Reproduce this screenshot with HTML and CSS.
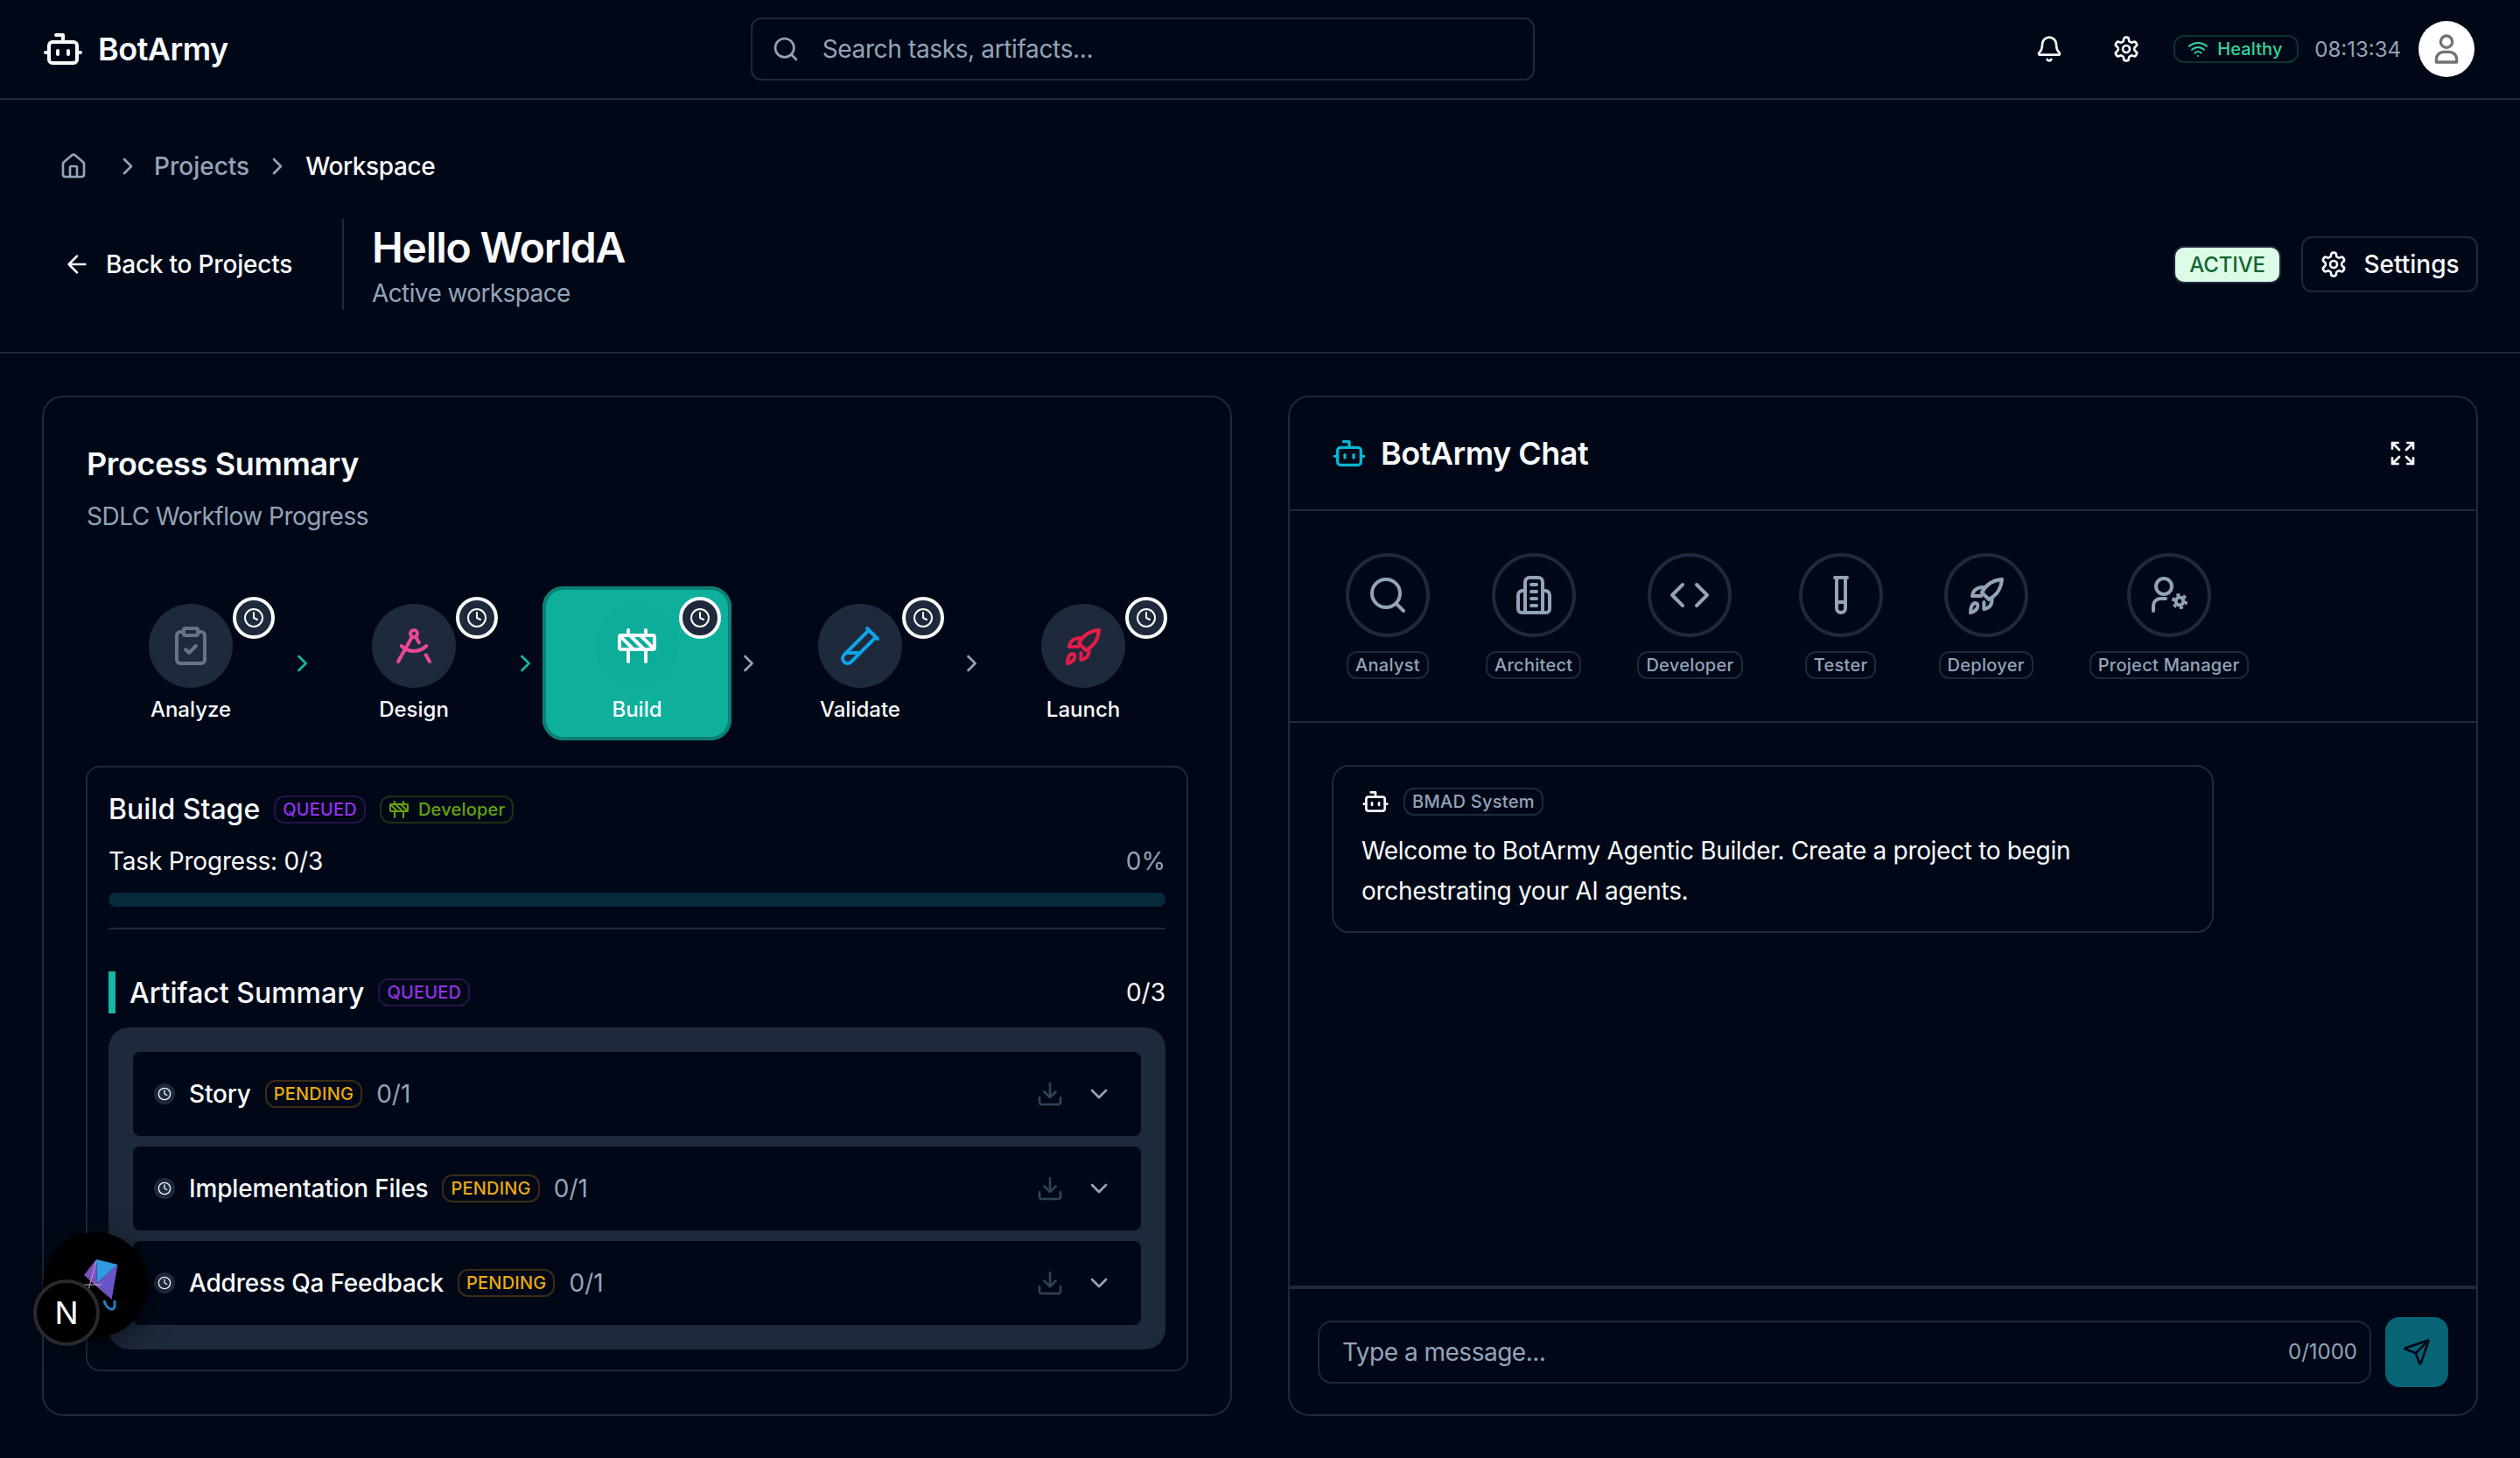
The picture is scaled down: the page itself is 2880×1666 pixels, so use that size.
FILE: index.html
```html
<!DOCTYPE html>
<html lang="en">
<head>
  <meta charset="UTF-8">
  <title>BotArmy - Workspace</title>
  <link rel="stylesheet" href="styles.css">
</head>
<body>
  <svg class="defs" aria-hidden="true">
    <symbol id="i-bot" viewBox="0 0 24 24"><path d="M12 8V4H8"/><rect x="4" y="8" width="16" height="12" rx="2"/><path d="M2 14h2M20 14h2M15 13v2M9 13v2"/></symbol>
    <symbol id="i-search" viewBox="0 0 24 24"><circle cx="11" cy="11" r="8"/><path d="m21 21-4.3-4.3"/></symbol>
    <symbol id="i-bell" viewBox="0 0 24 24"><path d="M10.268 21a2 2 0 0 0 3.464 0"/><path d="M3.262 15.326A1 1 0 0 0 4 17h16a1 1 0 0 0 .74-1.673C19.41 13.956 18 12.499 18 8A6 6 0 0 0 6 8c0 4.499-1.411 5.956-2.738 7.326"/></symbol>
    <symbol id="i-gear" viewBox="0 0 24 24"><path d="M12.22 2h-.44a2 2 0 0 0-2 2v.18a2 2 0 0 1-1 1.73l-.43.25a2 2 0 0 1-2 0l-.15-.08a2 2 0 0 0-2.73.73l-.22.38a2 2 0 0 0 .73 2.73l.15.1a2 2 0 0 1 1 1.72v.51a2 2 0 0 1-1 1.74l-.15.09a2 2 0 0 0-.73 2.73l.22.38a2 2 0 0 0 2.73.73l.15-.08a2 2 0 0 1 2 0l.43.25a2 2 0 0 1 1 1.73V20a2 2 0 0 0 2 2h.44a2 2 0 0 0 2-2v-.18a2 2 0 0 1 1-1.73l.43-.25a2 2 0 0 1 2 0l.15.08a2 2 0 0 0 2.73-.73l.22-.39a2 2 0 0 0-.73-2.73l-.15-.08a2 2 0 0 1-1-1.74v-.5a2 2 0 0 1 1-1.74l.15-.09a2 2 0 0 0 .73-2.73l-.22-.38a2 2 0 0 0-2.73-.73l-.15.08a2 2 0 0 1-2 0l-.43-.25a2 2 0 0 1-1-1.73V4a2 2 0 0 0-2-2z"/><circle cx="12" cy="12" r="3"/></symbol>
    <symbol id="i-wifi" viewBox="0 0 24 24"><path d="M12 20h.01M2 8.82a15 15 0 0 1 20 0M5 12.859a10 10 0 0 1 14 0M8.5 16.429a5 5 0 0 1 7 0"/></symbol>
    <symbol id="i-user" viewBox="0 0 24 24"><circle cx="12" cy="7" r="4"/><path d="M5 21v-2a5 5 0 0 1 5-5h4a5 5 0 0 1 5 5v2z"/></symbol>
    <symbol id="i-home" viewBox="0 0 24 24"><path d="M15 21v-8a1 1 0 0 0-1-1h-4a1 1 0 0 0-1 1v8"/><path d="M3 10a2 2 0 0 1 .709-1.528l7-5.999a2 2 0 0 1 2.582 0l7 5.999A2 2 0 0 1 21 10v9a2 2 0 0 1-2 2H5a2 2 0 0 1-2-2z"/></symbol>
    <symbol id="i-right" viewBox="0 0 24 24"><path d="m9 18 6-6-6-6"/></symbol>
    <symbol id="i-down" viewBox="0 0 24 24"><path d="m6 9 6 6 6-6"/></symbol>
    <symbol id="i-back" viewBox="0 0 24 24"><path d="m12 19-7-7 7-7M19 12H5"/></symbol>
    <symbol id="i-clock" viewBox="0 0 24 24"><circle cx="12" cy="12" r="10"/><path d="M12 6v6l4 2"/></symbol>
    <symbol id="i-clipboard" viewBox="0 0 24 24"><rect x="8" y="2" width="8" height="4" rx="1"/><path d="M16 4h2a2 2 0 0 1 2 2v14a2 2 0 0 1-2 2H6a2 2 0 0 1-2-2V6a2 2 0 0 1 2-2h2"/><path d="m9 14 2 2 4-4"/></symbol>
    <symbol id="i-compass" viewBox="0 0 24 24"><path d="m12.99 6.74 1.93 3.44M19.136 12a10 10 0 0 1-14.271 0M21 21l-2.16-3.84M3 21l8.02-14.26"/><circle cx="12" cy="5" r="2"/></symbol>
    <symbol id="i-barrier" viewBox="0 0 24 24"><rect x="2" y="6" width="20" height="8" rx="1"/><path d="M17 14v7M7 14v7M17 3v3M7 3v3M10 14 2.3 6.3M14 6l7.7 7.7M8 6l8 8"/></symbol>
    <symbol id="i-tube-d" viewBox="0 0 24 24"><path d="M21 7 6.82 21.18a2.83 2.83 0 0 1-3.99-.01a2.83 2.83 0 0 1 0-4L17 3"/><path d="m16 2 6 6M12 16H4"/></symbol>
    <symbol id="i-rocket" viewBox="0 0 24 24"><path d="M21 3c-5.500.500-9.500 3.500-11.500 7.500l4 4c4-2 7-6 7.500-11.500z"/><path d="M10.500 7.500c-3.500 0-6 1.500-6.500 5h5.200"/><path d="M15.200 13.500c.300 3.500-1 6-4.500 6.500v-4"/><path d="M3 22c0-3 1-5 2.500-5.500c1.500 0 2 1.500 1.500 2.500c-.500 1.500-2 2.500-4 3z"/></symbol>
    <symbol id="i-code" viewBox="0 0 24 24"><path d="m16 18 6-6-6-6M8 6l-6 6 6 6"/></symbol>
    <symbol id="i-building" viewBox="0 0 24 24"><path d="M7 22V4.500A2.500 2.500 0 0 1 9.500 2h5A2.500 2.500 0 0 1 17 4.500V22"/><path d="M7 9.500H5.500A2.500 2.500 0 0 0 3 12v8a2 2 0 0 0 2 2h14a2 2 0 0 0 2-2v-8a2.500 2.500 0 0 0-2.500-2.500H17"/><path d="M10.500 6h3M10.500 10h3M10.500 14h3M10.500 18h3"/></symbol>
    <symbol id="i-tube" viewBox="0 0 24 24"><path d="M14.500 2v17.500c0 1.400-1.100 2.500-2.500 2.500c-1.400 0-2.500-1.100-2.500-2.500V2"/><path d="M8.500 2h7M14.500 16h-5"/></symbol>
    <symbol id="i-usercog" viewBox="0 0 24 24"><circle cx="9" cy="7" r="4.500"/><path d="M3 21v-3a4 4 0 0 1 4-4h3"/><circle cx="18" cy="15.500" r="2.200"/><circle class="teeth" cx="18" cy="15.500" r="3.800"/></symbol>
    <symbol id="i-expand" viewBox="0 0 24 24"><path d="m15 15 6 6M15 9l6-6M21 16v5h-5M21 8V3h-5M3 16v5h5M3 21l6-6M3 8V3h5M3 3l6 6"/></symbol>
    <symbol id="i-download" viewBox="0 0 24 24"><path d="M12 15V3M21 15v4a2 2 0 0 1-2 2H5a2 2 0 0 1-2-2v-4M7 10l5 5 5-5"/></symbol>
    <symbol id="i-send" viewBox="0 0 24 24"><path d="M14.536 21.686a.5.5 0 0 0 .937-.024l6.5-19a.496.496 0 0 0-.635-.635l-19 6.500a.5.5 0 0 0-.024.937l7.930 3.180a2 2 0 0 1 1.112 1.110z"/><path d="m21.854 2.147-10.940 10.939"/></symbol>
  </svg>

  <header class="topbar">
    <div class="logo">
      <svg class="ico s48"><use href="#i-bot"/></svg>
      <span>BotArmy</span>
    </div>
    <div class="search">
      <svg class="ico s32"><use href="#i-search"/></svg>
      <input type="text" placeholder="Search tasks, artifacts...">
    </div>
    <div class="top-right">
      <button class="icon-btn"><svg class="ico s32"><use href="#i-bell"/></svg></button>
      <button class="icon-btn"><svg class="ico s32"><use href="#i-gear"/></svg></button>
      <span class="health"><svg class="ico s24"><use href="#i-wifi"/></svg>Healthy</span>
      <span class="clock">08:13:34</span>
      <span class="avatar"><svg class="ico s40"><use href="#i-user"/></svg></span>
    </div>
  </header>

  <section class="subhead">
    <nav class="crumbs">
      <svg class="ico s32"><use href="#i-home"/></svg>
      <svg class="ico s32 sep"><use href="#i-right"/></svg>
      <span>Projects</span>
      <svg class="ico s32 sep"><use href="#i-right"/></svg>
      <span class="current">Workspace</span>
    </nav>
    <div class="title-row">
      <a class="back"><svg class="ico s32"><use href="#i-back"/></svg>Back to Projects</a>
      <div class="title-block">
        <h1>Hello WorldA</h1>
        <p>Active workspace</p>
      </div>
      <span class="status">ACTIVE</span>
      <button class="settings"><svg class="ico s32"><use href="#i-gear"/></svg>Settings</button>
    </div>
  </section>

  <main class="columns">
    <section class="card process">
      <h2>Process Summary</h2>
      <p class="muted">SDLC Workflow Progress</p>

      <div class="stepper">
        <div class="step">
          <span class="disc slate"><svg class="ico s48"><use href="#i-clipboard"/></svg></span>
          <span class="step-name">Analyze</span>
          <span class="step-clock"><svg class="ico s24"><use href="#i-clock"/></svg></span>
        </div>
        <svg class="ico s32 arrow teal"><use href="#i-right"/></svg>
        <div class="step">
          <span class="disc pink"><svg class="ico s48"><use href="#i-compass"/></svg></span>
          <span class="step-name">Design</span>
          <span class="step-clock"><svg class="ico s24"><use href="#i-clock"/></svg></span>
        </div>
        <svg class="ico s32 arrow teal"><use href="#i-right"/></svg>
        <div class="step active">
          <span class="disc"><svg class="ico s48"><use href="#i-barrier"/></svg></span>
          <span class="step-name">Build</span>
          <span class="step-clock"><svg class="ico s24"><use href="#i-clock"/></svg></span>
        </div>
        <svg class="ico s32 arrow"><use href="#i-right"/></svg>
        <div class="step">
          <span class="disc sky"><svg class="ico s48"><use href="#i-tube-d"/></svg></span>
          <span class="step-name">Validate</span>
          <span class="step-clock"><svg class="ico s24"><use href="#i-clock"/></svg></span>
        </div>
        <svg class="ico s32 arrow"><use href="#i-right"/></svg>
        <div class="step">
          <span class="disc rose"><svg class="ico s48"><use href="#i-rocket"/></svg></span>
          <span class="step-name">Launch</span>
          <span class="step-clock"><svg class="ico s24"><use href="#i-clock"/></svg></span>
        </div>
      </div>

      <div class="stage">
        <div class="stage-head">
          <h3>Build Stage</h3>
          <span class="pill queued">QUEUED</span>
          <span class="pill dev"><svg class="ico s24"><use href="#i-barrier"/></svg>Developer</span>
        </div>
        <div class="task-row">
          <span class="task-label">Task Progress: 0/3</span>
          <span class="muted">0%</span>
        </div>
        <div class="bar"></div>
        <hr class="rule">
        <div class="artifact-head">
          <h3>Artifact Summary</h3>
          <span class="pill queued">QUEUED</span>
          <span class="count">0/3</span>
        </div>
        <div class="artifacts">
          <div class="artifact">
            <span class="mini-clock"><svg class="ico s16"><use href="#i-clock"/></svg></span>
            <span class="a-name">Story</span>
            <span class="pill pending">PENDING</span>
            <span class="muted">0/1</span>
            <svg class="ico s32 dl"><use href="#i-download"/></svg>
            <svg class="ico s32 more"><use href="#i-down"/></svg>
          </div>
          <div class="artifact">
            <span class="mini-clock"><svg class="ico s16"><use href="#i-clock"/></svg></span>
            <span class="a-name">Implementation Files</span>
            <span class="pill pending">PENDING</span>
            <span class="muted">0/1</span>
            <svg class="ico s32 dl"><use href="#i-download"/></svg>
            <svg class="ico s32 more"><use href="#i-down"/></svg>
          </div>
          <div class="artifact">
            <span class="mini-clock"><svg class="ico s16"><use href="#i-clock"/></svg></span>
            <span class="a-name">Address Qa Feedback</span>
            <span class="pill pending">PENDING</span>
            <span class="muted">0/1</span>
            <svg class="ico s32 dl"><use href="#i-download"/></svg>
            <svg class="ico s32 more"><use href="#i-down"/></svg>
          </div>
        </div>
      </div>
    </section>

    <section class="card chat">
      <div class="chat-head">
        <svg class="ico s40 cyan"><use href="#i-bot"/></svg>
        <h2>BotArmy Chat</h2>
        <svg class="ico s32 expand"><use href="#i-expand"/></svg>
      </div>
      <div class="agents">
        <div class="agent"><span class="agent-disc"><svg class="ico s48"><use href="#i-search"/></svg></span><span class="tag">Analyst</span></div>
        <div class="agent"><span class="agent-disc"><svg class="ico s48"><use href="#i-building"/></svg></span><span class="tag">Architect</span></div>
        <div class="agent"><span class="agent-disc"><svg class="ico s48"><use href="#i-code"/></svg></span><span class="tag">Developer</span></div>
        <div class="agent"><span class="agent-disc"><svg class="ico s48"><use href="#i-tube"/></svg></span><span class="tag">Tester</span></div>
        <div class="agent"><span class="agent-disc"><svg class="ico s48"><use href="#i-rocket"/></svg></span><span class="tag">Deployer</span></div>
        <div class="agent"><span class="agent-disc"><svg class="ico s48"><use href="#i-usercog"/></svg></span><span class="tag">Project Manager</span></div>
      </div>
      <div class="messages">
        <div class="message">
          <div class="sender">
            <svg class="ico s32"><use href="#i-bot"/></svg>
            <span class="tag">BMAD System</span>
          </div>
          <p>Welcome to BotArmy Agentic Builder. Create a project to begin orchestrating your AI agents.</p>
        </div>
      </div>
      <div class="composer">
        <div class="field">
          <input type="text" placeholder="Type a message...">
          <span class="limit">0/1000</span>
        </div>
        <button class="send"><svg class="ico s32"><use href="#i-send"/></svg></button>
      </div>
    </section>
  </main>

  <!-- dev overlay badges -->
  <div class="kite-badge">
    <svg class="kite" viewBox="0 0 120 120">
      <path d="M61 31 85.500 37 62 58z" fill="#2f9be0"/>
      <path d="M61 31 47 49 62 58z" fill="#7d4fc0"/>
      <path d="M85.500 37 78.600 77 62 58z" fill="#6a55c8"/>
      <path d="M47 49 78.600 77 62 58z" fill="#8a5cc4"/>
      <path d="M61 33 52 66M47 60h20" stroke="#b9b2c8" stroke-width="1" fill="none"/>
      <path d="M70 78c2 8 8 12 11 9c2-2 1-5 1-9" stroke="#1f7fc4" stroke-width="3" fill="none"/>
    </svg>
  </div>
  <div class="next-badge">N</div>
</body>
</html>
```

FILE: styles.css
```css
* { box-sizing: border-box; }
html, body { margin: 0; height: 100%; }
body {
  height: 1666px;
  overflow: hidden;
  background: #000817;
  color: #f8fafc;
  font-family: Inter, "Liberation Sans", sans-serif;
  font-size: 28px;
  display: flex;
  flex-direction: column;
}
h1, h2, h3, p { margin: 0; }
button { font: inherit; color: inherit; background: none; border: 0; padding: 0; }
input { font: inherit; letter-spacing: -.36px; background: none; border: 0; outline: 0; color: inherit; width: 100%; }
input::placeholder { color: #94a3b8; opacity: 1; }
.defs { display: none; }
.muted { color: #94a3b8; }

.ico { fill: none; stroke: currentColor; stroke-width: 2; stroke-linecap: round; stroke-linejoin: round; flex: none; }
.s16 { width: 16px; height: 16px; }
.s24 { width: 24px; height: 24px; }
.s32 { width: 32px; height: 32px; }
.s40 { width: 40px; height: 40px; }
.s48 { width: 48px; height: 48px; }
.teeth { stroke-dasharray: 2 1.980; stroke-linecap: butt; stroke-width: 1.500; }

/* top bar */
.topbar {
  height: 114px;
  flex: none;
  display: flex;
  align-items: center;
  padding: 0 52px 0 48px;
  border-bottom: 2px solid #1e293b;
}
.logo { display: flex; align-items: center; gap: 16px; font-size: 36px; font-weight: 600; letter-spacing: -.5px; }
.search {
  width: 896px;
  height: 72px;
  margin-left: 597px;
  display: flex;
  align-items: center;
  gap: 24px;
  padding: 0 22px;
  border: 2px solid #1e293b;
  border-radius: 12px;
  color: #94a3b8;
}
.top-right { margin-left: auto; display: flex; align-items: center; }
.icon-btn { width: 72px; height: 72px; display: flex; align-items: center; justify-content: center; margin-right: 16px; }
.health {
  display: flex;
  align-items: center;
  gap: 10px;
  width: 143px;
  height: 32px;
  padding-left: 14px;
  border: 2px solid #0b3330;
  border-radius: 12px;
  color: #34d399;
  font-size: 20px;
  font-weight: 500;
  letter-spacing: .1px;
  margin-left: 2px;
}
.clock { margin: 0 20px 0 18px; font-size: 24px; color: #94a3b8; }
.avatar { width: 64px; height: 64px; border-radius: 50%; background: #fff; color: #737373; display: flex; align-items: center; justify-content: center; }

/* page heading */
.subhead { flex: none; height: 290px; padding: 0 48px; border-bottom: 2px solid #1e293b; }
.crumbs { display: flex; align-items: center; height: 32px; margin-top: 60px; padding-left: 20px; color: #94a3b8; font-weight: 500; }
.crumbs .sep { margin: 0 14px 0 30px; }
.crumbs span + .sep { margin: 0 16px 0 16px; }
.crumbs .current { color: #f8fafc; letter-spacing: -.4px; }
.title-row { display: flex; align-items: center; height: 104px; margin-top: 44px; }
.back { display: flex; align-items: center; gap: 17px; padding-left: 24px; width: 345px; font-weight: 500; letter-spacing: -.2px; height: 104px; border-right: 2px solid #1e293b; }
.title-block { padding-left: 32px; margin-right: auto; }
h1 { font-size: 48px; font-weight: 600; line-height: 56px; letter-spacing: -1.2px; margin-top: 6px; }
.title-block p { margin-top: 4px; color: #94a3b8; line-height: 40px; letter-spacing: -.6px; }
.status {
  height: 43px;
  padding: 0 16px;
  display: flex;
  align-items: center;
  background: #dcfce7;
  border: 2px solid #1e293b;
  border-radius: 12px;
  color: #166534;
  font-size: 24px;
  font-weight: 500;
  letter-spacing: -.1px;
  margin-right: 23px;
}
.settings {
  height: 64px;
  width: 202px;
  display: flex;
  align-items: center;
  justify-content: center;
  gap: 18px;
  border: 2px solid #1e293b;
  border-radius: 12px;
  font-weight: 500;
}

/* cards */
.columns { flex: 1; display: grid; grid-template-columns: 1fr 1fr; gap: 64px; padding: 48px; min-height: 0; }
.card { border: 2px solid #1e293b; border-radius: 24px; min-height: 0; }
.process { padding: 56px 48px 48px; }
.process h2 { font-size: 36px; font-weight: 600; line-height: 40px; letter-spacing: -.36px; padding-left: 1px; }
.process > .muted { margin-top: 20px; line-height: 40px; letter-spacing: -.5px; padding-left: 1px; }

.stepper { display: flex; align-items: center; margin-top: 60px; padding: 0 12px; }
.step {
  position: relative;
  width: 216px;
  height: 176px;
  flex: none;
  display: flex;
  flex-direction: column;
  align-items: center;
  gap: 9px;
  padding-top: 20px;
  border-radius: 24px;
}
.step.active { background: #0eb09b; box-shadow: inset 0 0 0 4px #0d7f74; }
.disc { width: 96px; height: 96px; border-radius: 50%; background: #1e293b; display: flex; align-items: center; justify-content: center; }
.step.active .disc { background: #0dae99; }
.slate { color: #64748b; }
.pink { color: #ec4899; }
.sky { color: #0ea5e9; }
.rose { color: #e11d48; }
.step-name { font-size: 24px; font-weight: 500; line-height: 32px; }
.step-clock {
  position: absolute;
  top: 12px;
  right: 12px;
  width: 48px;
  height: 48px;
  border-radius: 50%;
  background: #1e293b;
  border: 4px solid #fff;
  display: flex;
  align-items: center;
  justify-content: center;
}
.arrow { width: 39px; color: #94a3b8; }
.arrow.teal { color: #14b8a6; }

.stage { margin-top: 29px; height: 692px; padding: 32px 24px 0; border: 2px solid #1e293b; border-radius: 16px; }
.stage-head { display: flex; align-items: center; gap: 16px; height: 32px; }
h3 { font-size: 32px; font-weight: 500; line-height: 32px; }
.pill {
  height: 32px;
  display: inline-flex;
  align-items: center;
  padding: 0 8px;
  border: 2px solid;
  border-radius: 12px;
  font-size: 20px;
  font-weight: 500;
  letter-spacing: .2px;
  white-space: nowrap;
}
.queued { color: #9333ea; border-color: #27124a; }
.dev { color: #65a30d; border-color: #1c3014; gap: 10px; }
.pending { color: #eaab0f; border-color: #3a2c14; }

.task-row { display: flex; justify-content: space-between; align-items: center; height: 40px; margin-top: 23px; }
.task-label { letter-spacing: -.2px; }
.bar { height: 16px; margin-top: 16px; border-radius: 8px; background: #06293b; }
.rule { height: 2px; margin: 24px 0 0; border: 0; background: #1e293b; }
.artifact-head { display: flex; align-items: center; gap: 16px; height: 48px; margin-top: 48px; padding-left: 16px; border-left: 8px solid #14b8a6; }
.artifact-head h3 { padding-top: 2px; }
.count { margin-left: auto; }
.artifacts { display: flex; flex-direction: column; gap: 12px; margin-top: 16px; padding: 28px; background: #1e293b; border-radius: 24px; }
.artifact { height: 96px; display: flex; align-items: center; padding: 0 32px 0 24px; background: #000817; border-radius: 8px; }
.mini-clock { width: 24px; height: 24px; border-radius: 50%; background: #1e293b; display: flex; align-items: center; justify-content: center; margin-right: 16px; }
.a-name { font-weight: 500; letter-spacing: -.18px; margin-right: 16px; }
.artifact .muted { margin-left: 16px; }
.dl { margin-left: auto; color: #334155; }
.more { margin-left: 24px; color: #94a3b8; }

/* chat */
.chat { display: flex; flex-direction: column; overflow: hidden; }
.chat-head { flex: none; height: 130px; display: flex; align-items: center; gap: 16px; padding: 0 68px 0 48px; border-bottom: 2px solid #1e293b; }
.chat-head h2 { font-size: 36px; font-weight: 600; letter-spacing: -.5px; }
.cyan { color: #06b6d4; }
.expand { margin-left: auto; }
.agents { flex: none; display: flex; gap: 64px; padding: 48px 64px; border-bottom: 2px solid #1e293b; }
.agent { min-width: 96px; display: flex; flex-direction: column; align-items: center; gap: 16px; }
.agent-disc { width: 96px; height: 96px; border-radius: 50%; border: 4px solid #1e293b; color: #94a3b8; display: flex; align-items: center; justify-content: center; }
.tag { height: 32px; padding: 0 8px; display: inline-flex; align-items: center; border: 2px solid #1e293b; border-radius: 12px; font-size: 20px; font-weight: 500; letter-spacing: .28px; color: #94a3b8; white-space: nowrap; }
.messages { flex: 1; padding: 48px; min-height: 0; }
.message { width: 1008px; padding: 24px 32px 23px; border: 2px solid #1e293b; border-radius: 20px; }
.sender { display: flex; align-items: center; gap: 16px; }
.message p { margin-top: 17px; line-height: 46px; letter-spacing: -.32px; }
.composer { flex: none; height: 147px; display: flex; align-items: center; gap: 16px; padding: 0 32px; border-top: 4px solid #1e293b; }
.composer input { letter-spacing: -.5px; }
.field { flex: 1; height: 72px; display: flex; align-items: center; padding: 0 14px 0 24px; border: 2px solid #1e293b; border-radius: 16px; }
.limit { font-size: 24px; color: #94a3b8; }
.send { width: 72px; height: 80px; display: flex; align-items: center; justify-content: center; background: #066475; color: #000817; border-radius: 16px; }

/* overlay badges, bottom left */
.kite-badge { position: absolute; left: 49px; top: 1408px; width: 120px; height: 120px; border-radius: 50%; background: #000; box-shadow: 0 8px 32px rgba(0, 0, 0, .5); }
.kite { width: 120px; height: 120px; display: block; }
.next-badge {
  position: absolute;
  left: 38px;
  top: 1462px;
  width: 76px;
  height: 76px;
  border-radius: 50%;
  background: #000;
  border: 4px solid #2a2a2a;
  display: flex;
  align-items: center;
  justify-content: center;
  font-size: 36px;
  font-weight: 400;
  color: #fff;
}
```
